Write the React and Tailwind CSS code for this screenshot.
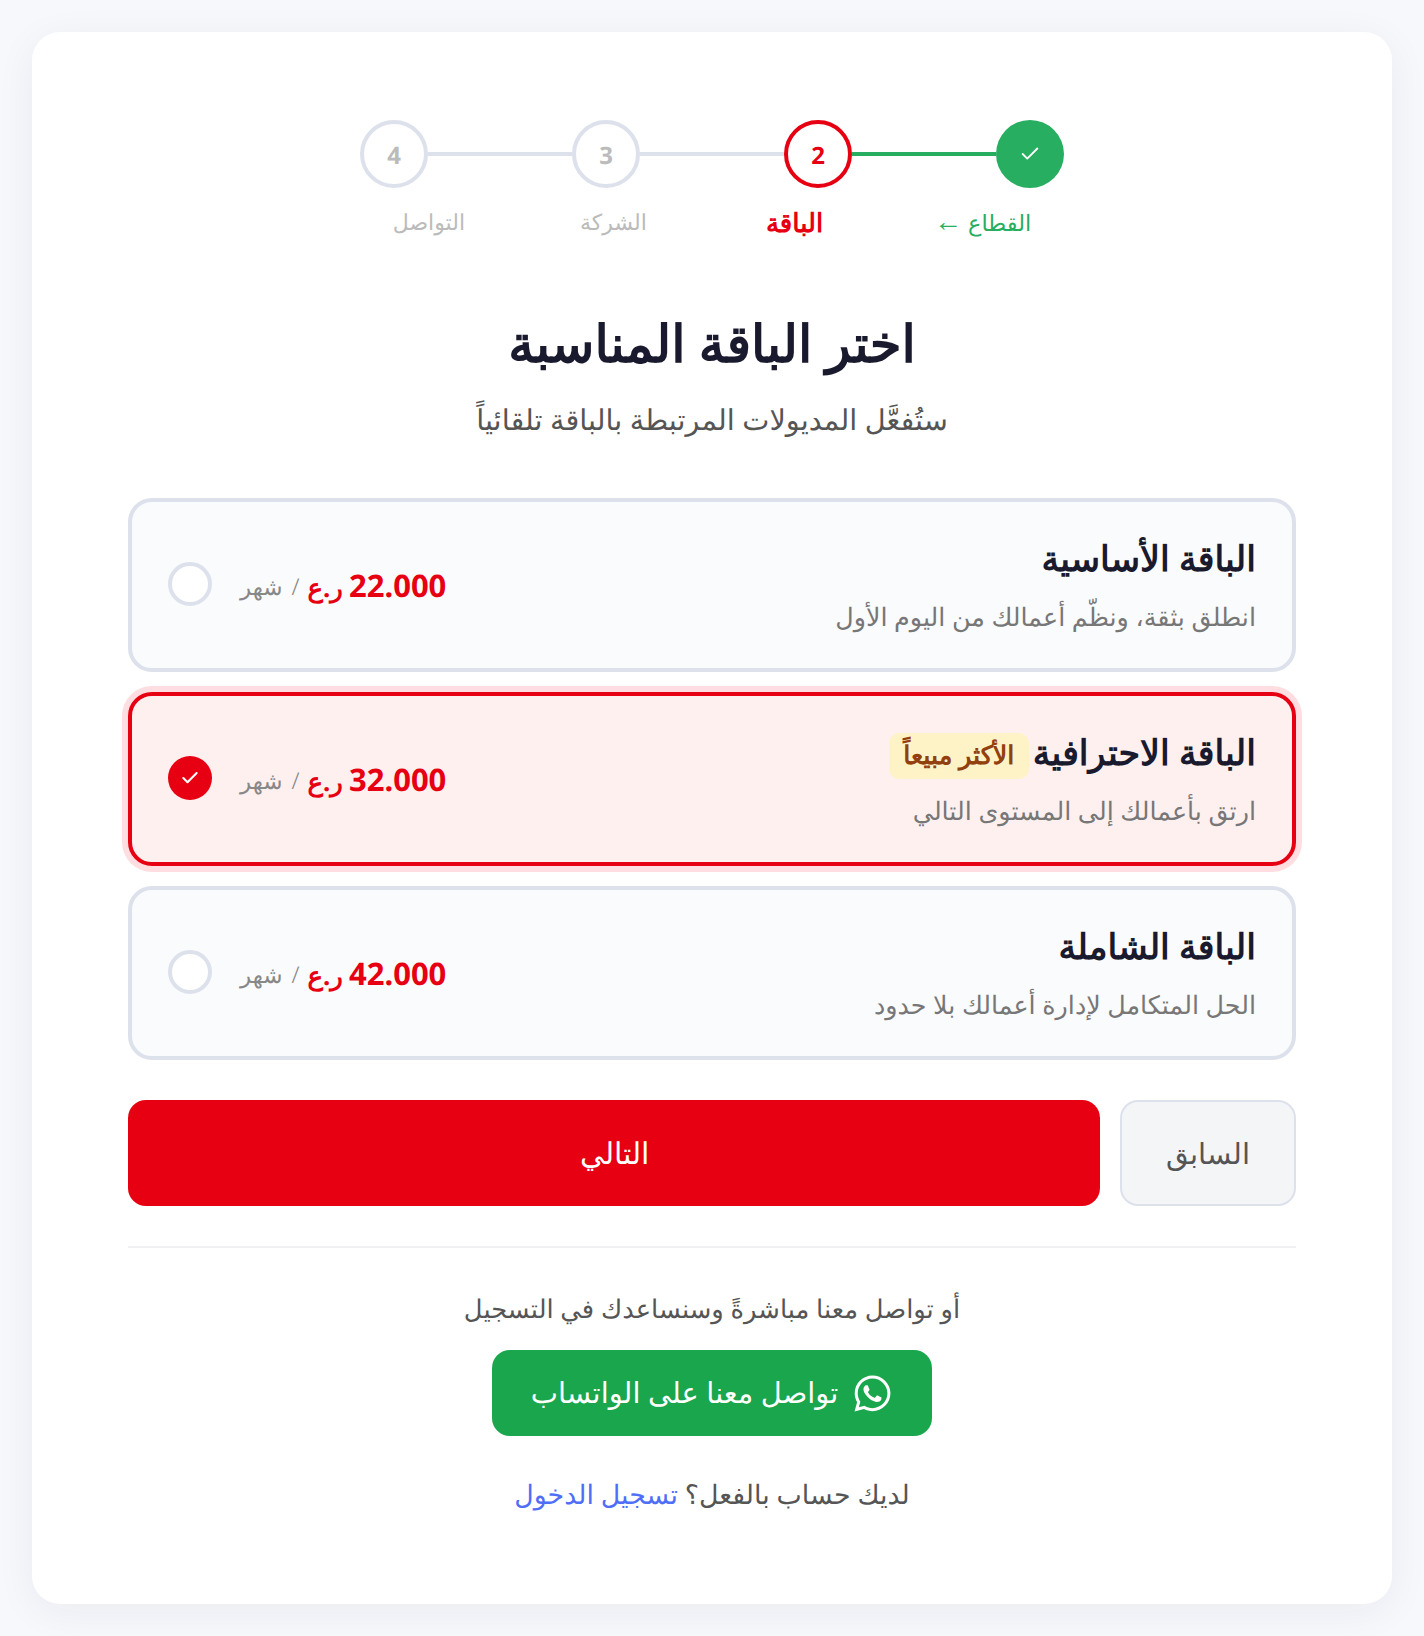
import React from 'react';
import { Check } from 'lucide-react';
import { FaWhatsapp } from 'react-icons/fa';

const steps = [
  { id: 1, state: 'done' },
  { id: 2, state: 'active' },
  { id: 3, state: 'pending' },
  { id: 4, state: 'pending' },
];

const plans = [
  { name: 'الباقة الأساسية', desc: 'انطلق بثقة، ونظّم أعمالك من اليوم الأول', price: '22.000' },
  { name: 'الباقة الاحترافية', desc: 'ارتق بأعمالك إلى المستوى التالي', price: '32.000', badge: 'الأكثر مبيعاً', selected: true },
  { name: 'الباقة الشاملة', desc: 'الحل المتكامل لإدارة أعمالك بلا حدود', price: '42.000' },
];

const StepCircle = ({ state, id }) => {
  if (state === 'done') {
    return (
      <div className="w-[68px] h-[68px] shrink-0 rounded-full bg-[#27ae60] flex items-center justify-center text-white">
        <Check className="w-[22px] h-[22px]" strokeWidth={2} />
      </div>
    );
  }
  return (
    <div
      className={`w-[68px] h-[68px] shrink-0 rounded-full border-4 bg-white flex items-center justify-center pt-1 text-[24px] font-bold ${
        state === 'active' ? 'border-[#e60012] text-[#e60012]' : 'border-[#dde1ec] text-[#bbbbbb]'
      }`}
    >
      {id}
    </div>
  );
};

const PlanCard = ({ plan }) => (
  <div
    className={`h-[174px] rounded-[24px] border-4 px-9 flex items-center justify-between ${
      plan.selected
        ? 'border-[#e60012] bg-[#fff0f0] shadow-[0_0_0_6px_#ffdde0]'
        : 'border-[#dde1ec] bg-[#fafbfc]'
    }`}
  >
    <div className="flex flex-col gap-5 mt-[3px]">
      <div className="flex items-center gap-1 h-[40px]">
        <h3 className="text-[35px] leading-[40px] font-bold text-[#1a1a2e]">{plan.name}</h3>
        {plan.badge && (
          <span className="w-[140px] h-[46px] mt-1.5 rounded-[10px] bg-[#fef3c7] text-[#92400e] text-[25.5px] font-bold flex items-center justify-center">
            {plan.badge}
          </span>
        )}
      </div>
      <p className="text-[25.4px] leading-[36px] text-[#777777] font-light">{plan.desc}</p>
    </div>
    <div className="flex items-center gap-7">
      <div className="flex items-baseline gap-2 mt-1">
        <span className="text-[31px] leading-[40px] font-bold text-[#e60012]">
          {plan.price} <span className="text-[26px] -mr-0.5">ر.ع</span>
        </span>
        <span className="text-[23px] leading-[40px] text-[#888888] font-light [word-spacing:3px] -translate-y-0.5">/ شهر</span>
      </div>
      <div
        className={`w-11 h-11 mb-0.5 rounded-full flex items-center justify-center text-white ${
          plan.selected ? 'bg-[#e60012]' : 'border-4 border-[#dde1ec] bg-white'
        }`}
      >
        {plan.selected && <Check className="w-[20px] h-[20px]" strokeWidth={2.5} />}
      </div>
    </div>
  </div>
);

export default function App() {
  return (
    <div dir="rtl" className="min-h-[1636px] bg-[#f7f8fc] p-8 font-['Noto_Sans',sans-serif] [text-rendering:geometricPrecision]">
      <div className="h-[1572px] bg-white rounded-[28px] shadow-[0_8px_40px_rgba(26,26,46,0.06)] px-24 pt-[88px]">
        {/* Stepper */}
        <div className="flex items-center justify-center">
          {steps.map((step, i) => (
            <React.Fragment key={step.id}>
              <StepCircle state={step.state} id={step.id} />
              {i < steps.length - 1 && (
                <div className={`w-[144px] h-1 ${step.state === 'done' ? 'bg-[#27ae60]' : 'bg-[#dde1ec]'}`} />
              )}
            </React.Fragment>
          ))}
        </div>
        <div className="mt-4 flex justify-center gap-[115px] h-[36px] text-[22px] leading-[36px] font-light text-[#bbbbbb]">
          <span className="text-[#27ae60] text-[22.5px]">
            القطاع <span className="font-['Liberation_Sans'] text-[28px]">←</span>
          </span>
          <span className="text-[#e60012] text-[26px] font-bold -mr-1 ml-1">الباقة</span>
          <span>الشركة</span>
          <span>التواصل</span>
        </div>

        {/* Heading */}
        <h1 className="mt-[71px] text-center text-[51.5px] leading-[64px] font-bold text-[#1a1a2e]">اختر الباقة المناسبة</h1>
        <p className="mt-[25px] text-center text-[28.8px] leading-[40px] font-light text-[#555555]">ستُفعَّل المديولات المرتبطة بالباقة تلقائياً</p>

        {/* Plans */}
        <div className="mt-[58px] flex flex-col gap-5">
          {plans.map((plan) => (
            <PlanCard key={plan.name} plan={plan} />
          ))}
        </div>

        {/* Actions */}
        <div className="mt-10 flex gap-5 h-[106px]">
          <button className="w-[176px] rounded-[18px] border-2 border-[#dde1ec] bg-[#f4f5f7] text-[#555555] text-[29px]">السابق</button>
          <button className="flex-1 pb-0.5 rounded-[18px] bg-[#e60012] text-white text-[30px]">التالي</button>
        </div>

        <div className="mt-10 h-0.5 bg-[#f0f0f3]" />

        {/* Contact */}
        <p className="mt-[42px] text-center text-[25.8px] leading-[36px] font-light text-[#555555]">أو تواصل معنا مباشرةً وسنساعدك في التسجيل</p>
        <div className="mt-6 flex justify-center">
          <a className="w-[440px] h-[86px] rounded-[18px] bg-[#19a64c] text-white flex items-center justify-center gap-[14px] text-[28.9px] font-light">
            <FaWhatsapp className="w-[41px] h-[41px]" />
            تواصل معنا على الواتساب
          </a>
        </div>
        <p className="mt-[38px] text-center text-[26.8px] leading-[40px] font-light text-[#555555]">
          لديك حساب بالفعل؟ <a className="text-[#4f6ef7]">تسجيل الدخول</a>
        </p>
      </div>
    </div>
  );
}
